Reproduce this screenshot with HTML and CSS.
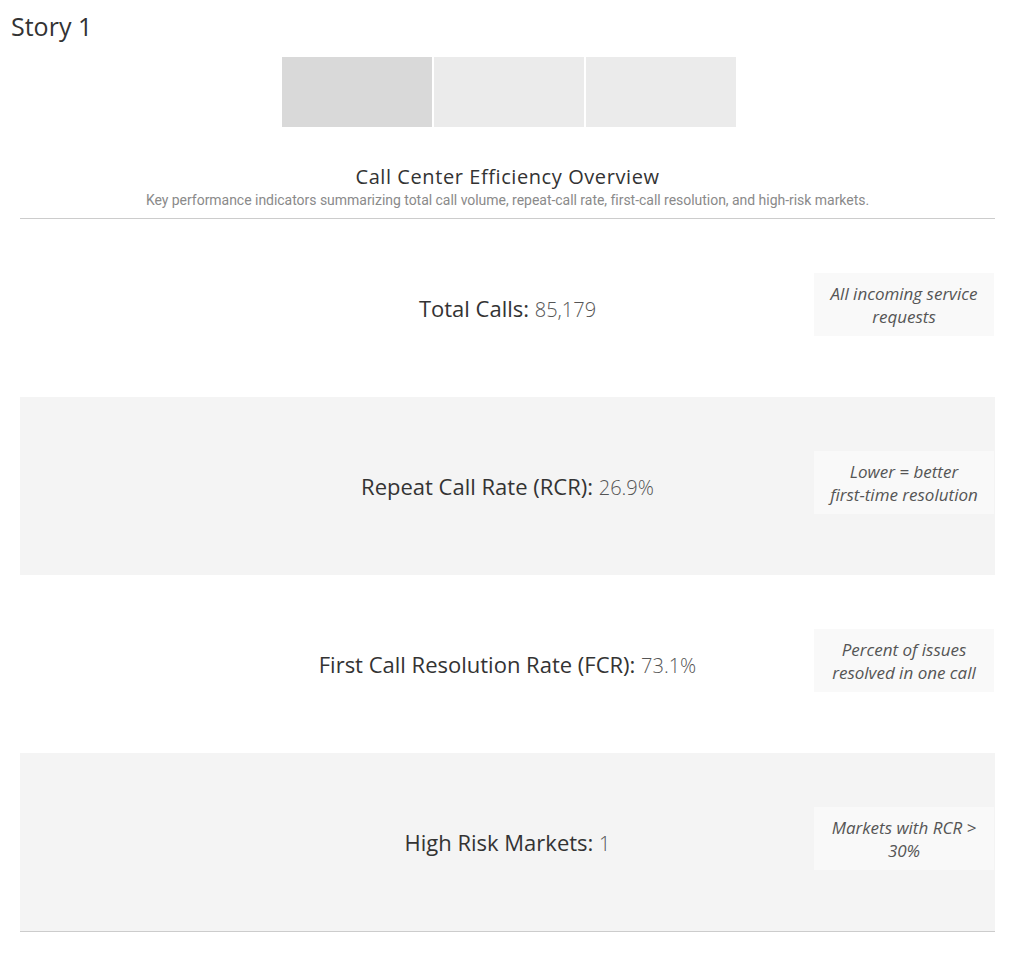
FILE: index.html
```html
<!DOCTYPE html>
<html>
<head>
<meta charset="utf-8">
<link rel="stylesheet" href="styles.css">
</head>
<body>
<div class="story-title">Story 1</div>
<nav class="story-nav">
  <div class="story-point active"></div>
  <div class="story-point"></div>
  <div class="story-point"></div>
</nav>
<main class="dashboard">
  <header class="dash-header">
    <h1 class="dash-title">Call Center Efficiency Overview</h1>
    <p class="dash-sub">Key performance indicators summarizing total call volume, repeat-call rate, first-call resolution, and high-risk markets.</p>
  </header>
  <section class="kpis">
    <div class="kpi-row">
      <div class="kpi"><span class="kpi-label">Total Calls:</span> <span class="kpi-value">85,179</span></div>
      <div class="kpi-note">All incoming service requests</div>
    </div>
    <div class="kpi-row shaded">
      <div class="kpi"><span class="kpi-label">Repeat Call Rate (RCR):</span> <span class="kpi-value">26.9%</span></div>
      <div class="kpi-note">Lower = better <span class="nowrap">first-time</span> resolution</div>
    </div>
    <div class="kpi-row">
      <div class="kpi"><span class="kpi-label">First Call Resolution Rate (FCR):</span> <span class="kpi-value">73.1%</span></div>
      <div class="kpi-note">Percent of issues resolved in one call</div>
    </div>
    <div class="kpi-row shaded">
      <div class="kpi"><span class="kpi-label">High Risk Markets:</span> <span class="kpi-value">1</span></div>
      <div class="kpi-note">Markets with RCR &gt; 30%</div>
    </div>
  </section>
</main>
</body>
</html>
```

FILE: styles.css
```css
html, body {
  margin: 0;
  padding: 0;
  background: #ffffff;
}
body {
  font-family: "Open Sans", "Noto Sans", sans-serif;
  color: #333333;
  width: 1015px;
}
.story-title {
  font-size: 25px;
  line-height: 30px;
  padding: 11px 0 0 11px;
  height: 45px;
  box-sizing: border-box;
  color: #333333;
}
.story-nav {
  display: flex;
  gap: 2px;
  padding-left: 282px;
  margin-top: 12px;
}
.story-point {
  width: 150px;
  height: 70px;
  background: #ebebeb;
}
.story-point.active {
  background: #d9d9d9;
}
.dashboard {
  margin: 0 20px;
  padding-top: 37px;
}
.dash-header {
  text-align: center;
  border-bottom: 1px solid #cccccc;
  padding-bottom: 8px;
}
.dash-title {
  margin: 0;
  font-weight: 400;
  font-size: 20px;
  line-height: 26px;
  letter-spacing: 0.58px;
  color: #333333;
}
.dash-sub {
  margin: 0;
  font-family: "Roboto", sans-serif;
  font-size: 14px;
  line-height: 20px;
  color: #8a8a8a;
  letter-spacing: -0.03px;
}
.kpis {
  border-bottom: 1px solid #cccccc;
}
.kpi-row {
  display: grid;
  grid-template-columns: minmax(0, 1fr) auto minmax(0, 1fr);
  height: 178px;
  align-items: center;
}
.kpi-row.shaded {
  background: #f4f4f4;
}
.kpi {
  grid-column: 2;
  font-size: 22px;
  white-space: nowrap;
  color: #333333;
}
.kpi-value {
  font-size: 20px;
  font-weight: 300;
  color: #555555;
}
.kpi-note {
  grid-column: 3;
  justify-self: end;
  align-self: start;
  margin-top: 54px;
  margin-right: 1px;
  width: 180px;
  height: 63px;
  box-sizing: border-box;
  padding: 9px 10px 0;
  background: #f9f9f9;
  font-style: italic;
  font-size: 17px;
  line-height: 23px;
  text-align: center;
  color: #555555;
}
.nowrap {
  white-space: nowrap;
}
```
